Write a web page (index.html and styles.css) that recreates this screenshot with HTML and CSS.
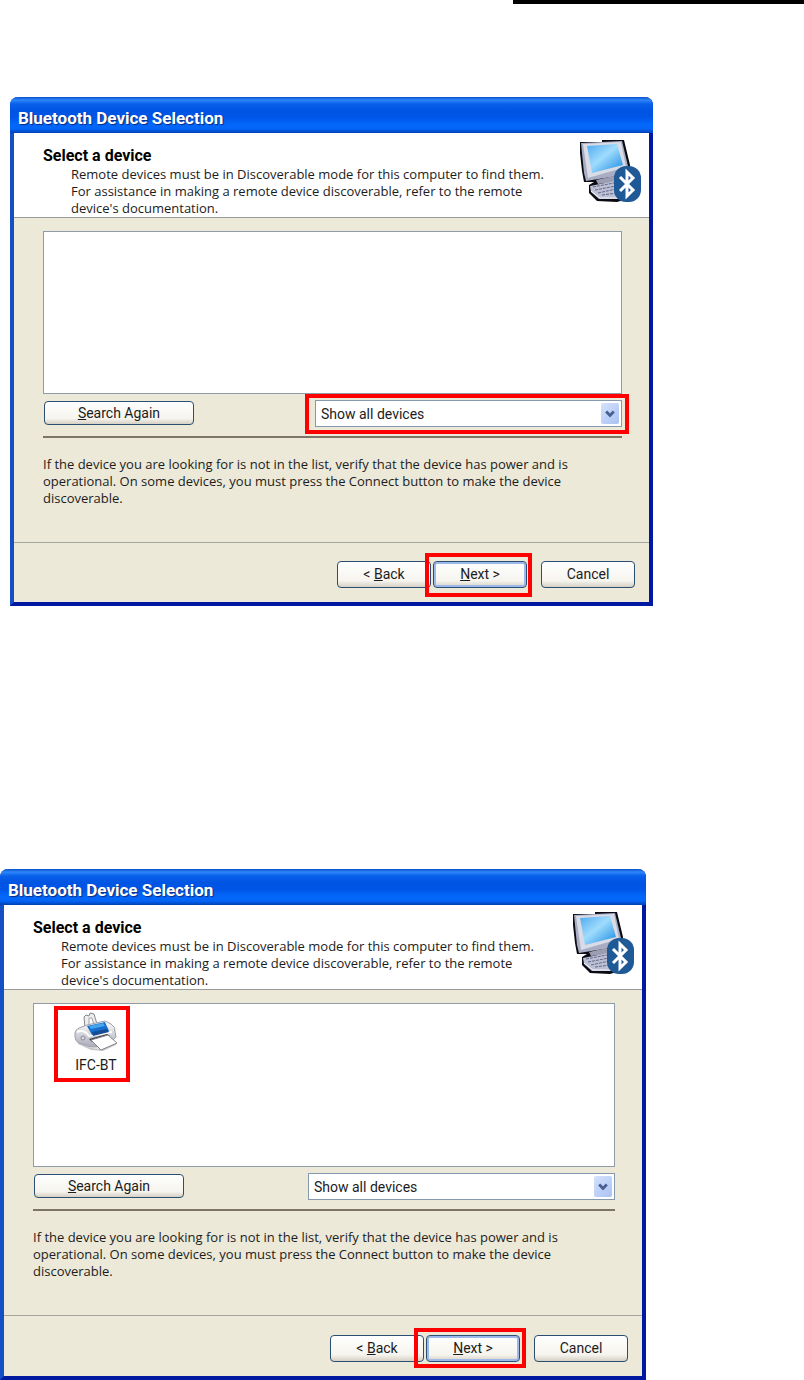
FILE: index.html
```
<!DOCTYPE html>
<html lang="en">
<head>
    <meta charset="UTF-8">
    <meta name="viewport" content="width=device-width, initial-scale=1.0">
    <title>Bluetooth Device Selection</title>
    <link rel="stylesheet" href="styles.css">
</head>
<body>
    <!-- Shared icons -->
    <svg class="sprite" aria-hidden="true">
        <defs>
            <linearGradient id="screen" x1="0" y1="0" x2="1" y2="1">
                <stop offset="0" stop-color="#4fa9ee"/>
                <stop offset="0.45" stop-color="#9fdcfd"/>
                <stop offset="1" stop-color="#1487e0"/>
            </linearGradient>
            <linearGradient id="shell" x1="0" y1="0" x2="0" y2="1">
                <stop offset="0" stop-color="#ffffff"/>
                <stop offset="1" stop-color="#a9abb8"/>
            </linearGradient>
        </defs>
        <symbol id="icon-computer" viewBox="0 0 62 64">
            <path d="M1 3 L23 3 L23 1 L45 1 L51 26 L48 60 L38 63 L18 62 L10 54 L10 46 L15 43 L5 43 L3 32 L1 14 Z" fill="#0a0a12"/>
            <path d="M2 4 L43 2 L49 27 L38 37 L7 42 L5 34 Z" fill="#a9adc4"/>
            <path d="M4 5 L42 3 L47 28 L9 39 Z" fill="#d9dbe6"/>
            <path d="M8 7 L38 5 L44 26 L13 34 Z" fill="url(#screen)"/>
            <path d="M17 41 L35 37 L36 43 L19 45 Z" fill="#9b9db2"/>
            <path d="M11 47 L36 42 L42 50 L40 60 L20 60 L12 53 Z" fill="#bcc0d4"/>
            <path d="M14 48 L35 44 M16 51 L37 47 M19 54 L37 50 M23 56 L38 54" stroke="#63688a" stroke-width="1" stroke-dasharray="3 1"/>
            <path d="M12 52 L21 59 L40 59" stroke="#f4f4fa" stroke-width="1" fill="none"/>
            <rect x="35" y="27" width="27" height="36" rx="12" fill="#205a96"/>
            <path d="M41 38 L54 51 L48 57 L48 33 L54 39 L41 52" fill="none" stroke="#fff" stroke-width="3"/>
        </symbol>
        <symbol id="icon-printer" viewBox="0 0 44 40">
            <path d="M3 28 L17 36 L29 37 L42 30 L42 33 L29 39 L17 38 L4 32 Z" fill="#c7c7cb"/>
            <path d="M11 16 L10 5 L12 3 L15 4 L16 1 L20 2 L23 12" fill="#eeeef0" stroke="#85868c"/>
            <path d="M15 14 L15 6 L18 6 L20 13" fill="#fff" stroke="#a3a4aa"/>
            <path d="M1 21 Q1 18 5 16 L13 13 L31 9 L37 12 Q42 15 41 20 L42 25 L39 28 L23 35 L17 35 L5 31 Q1 29 1 25 Z" fill="url(#shell)" stroke="#a0a1a9"/>
            <path d="M3 20 Q10 17 15 24 L38 20" fill="none" stroke="#fff" stroke-width="2"/>
            <path d="M13 14 L31 10 L35 19 L18 23 Z" fill="#176fce"/>
            <path d="M15 14 L29 11 L31 14 L17 17 Z" fill="#48a5ed"/>
            <path d="M18 20 L33 17 L35 20 L19 24 Z" fill="#164c96"/>
            <path d="M15 27 L33 22 L36 24 L18 30 Z" fill="#3c3d46"/>
            <path d="M17 28 L34 23 L43 31 L27 38 Z" fill="#fff" stroke="#83848a"/>
            <circle cx="9" cy="26" r="2" fill="#d9d9df" stroke="#888992"/>
        </symbol>
        <symbol id="icon-chevron" viewBox="0 0 18 22">
            <path d="M5 9 L9 13 L13 9" fill="none" stroke="#485f91" stroke-width="3"/>
        </symbol>
    </svg>

    <div class="rule"></div>

    <main class="page">
        <section class="dialog dialog-search">
            <h1 class="title">Bluetooth Device Selection</h1>
            <header class="intro">
                <div class="intro-text">
                    <h2>Select a device</h2>
                    <p>Remote devices must be in Discoverable mode for this computer to find them.<br>
                    For assistance in making a remote device discoverable, refer to the remote<br>
                    device's documentation.</p>
                </div>
                <svg class="computer" aria-hidden="true"><use href="#icon-computer"/></svg>
            </header>
            <div class="content">
                <div class="device-list"></div>
                <div class="tools">
                    <button type="button" class="btn btn-search"><u>S</u>earch Again</button>
                    <div class="select-box highlight">
                        <select aria-label="Device filter">
                            <option>Show all devices</option>
                        </select>
                        <svg class="arrow" aria-hidden="true"><use href="#icon-chevron"/></svg>
                    </div>
                </div>
                <hr>
                <p class="hint">If the device you are looking for is not in the list, verify that the device has power and is<br>
                operational. On some devices, you must press the Connect button to make the device<br>
                discoverable.</p>
            </div>
            <footer class="actions">
                <button type="button" class="btn">&lt; <u>B</u>ack</button>
                <div class="next highlight">
                    <button type="button" class="btn btn-default"><u>N</u>ext &gt;</button>
                </div>
                <button type="button" class="btn">Cancel</button>
            </footer>
        </section>

        <section class="dialog dialog-found">
            <h1 class="title">Bluetooth Device Selection</h1>
            <header class="intro">
                <div class="intro-text">
                    <h2>Select a device</h2>
                    <p>Remote devices must be in Discoverable mode for this computer to find them.<br>
                    For assistance in making a remote device discoverable, refer to the remote<br>
                    device's documentation.</p>
                </div>
                <svg class="computer" aria-hidden="true"><use href="#icon-computer"/></svg>
            </header>
            <div class="content">
                <div class="device-list">
                    <button type="button" class="device highlight">
                        <svg class="printer" aria-hidden="true"><use href="#icon-printer"/></svg>
                        <span>IFC-BT</span>
                    </button>
                </div>
                <div class="tools">
                    <button type="button" class="btn btn-search"><u>S</u>earch Again</button>
                    <div class="select-box">
                        <select aria-label="Device filter">
                            <option>Show all devices</option>
                        </select>
                        <svg class="arrow" aria-hidden="true"><use href="#icon-chevron"/></svg>
                    </div>
                </div>
                <hr>
                <p class="hint">If the device you are looking for is not in the list, verify that the device has power and is<br>
                operational. On some devices, you must press the Connect button to make the device<br>
                discoverable.</p>
            </div>
            <footer class="actions">
                <button type="button" class="btn">&lt; <u>B</u>ack</button>
                <div class="next highlight">
                    <button type="button" class="btn btn-default"><u>N</u>ext &gt;</button>
                </div>
                <button type="button" class="btn">Cancel</button>
            </footer>
        </section>
    </main>
</body>
</html>
```
FILE: styles.css
```
* {
    box-sizing: border-box;
}
body {
    margin: 0;
    background-color: #fff;
    color: #1c1c1c;
    font-family: Roboto, "Liberation Sans", Arial, sans-serif;
    font-size: 14px;
    line-height: 17px;
}
h1, h2, p {
    margin: 0;
}
p {
    font-family: "Open Sans", "Liberation Sans", Arial, sans-serif;
    font-size: 13px;
}
.sprite {
    display: block;
    width: 0;
    height: 0;
}
.rule {
    width: 291px;
    height: 4px;
    margin-left: auto;
    background-color: #000;
}
.page {
    display: flex;
    flex-direction: column;
    gap: 263px;
    padding-top: 93px;
}

/* Dialog window */
.dialog {
    width: 100%;
    background-color: #ece9d8;
    border: 4px solid #0019a0;
    border-top: 0;
    border-left-color: #1450c4;
    border-radius: 8px 8px 0 0;
}
.dialog-search {
    max-width: 643px;
    margin-left: 10px;
}
.dialog-found {
    max-width: 646px;
}
.title {
    height: 36px;
    margin: 0 -4px;
    padding: 4px 8px 0;
    border-radius: 8px 8px 0 0;
    background: linear-gradient(#0a50cc 0, #2f86fa 3px, #0860ea 7px, #0054e3 14px, #0055e8 20px, #0468fc 28px, #0464f6 32px, #0040b4 36px);
    color: #fff;
    font-size: 17px;
    line-height: 34px;
    text-shadow: 1px 1px 1px #0a2a80;
}
.intro {
    display: flex;
    justify-content: space-between;
    padding: 6px 8px 0 29px;
    background-color: #fff;
    border-bottom: 1px solid #9a9c9c;
}
.intro-text {
    padding-top: 8px;
}
.intro h2 {
    color: #000;
    font-size: 16px;
    line-height: 17px;
}
.intro p {
    margin: 2px 0 0 28px;
}
.computer {
    flex: none;
    width: 62px;
    height: 64px;
}
.content {
    padding: 13px 27px 35px 29px;
}
.device-list {
    min-height: 163px;
    padding: 2px 20px;
    background-color: #fff;
    border: 1px solid #8d9ca8;
}
.dialog-found .device-list {
    min-height: 164px;
}
.tools {
    display: flex;
    justify-content: space-between;
    align-items: flex-start;
    margin: 6px 0 9px;
}
hr {
    height: 2px;
    margin: 0 0 18px;
    border: 0;
    background-color: #7d7666;
}
.actions {
    display: flex;
    justify-content: flex-end;
    padding: 18px 14px 14px;
    border-top: 1px solid #a5a79f;
}
.dialog-found .actions {
    padding-top: 19px;
}

/* Controls */
.btn {
    width: 94px;
    height: 27px;
    padding: 0;
    border: 1px solid #2a4f72;
    border-radius: 4px;
    background: linear-gradient(#fff, #f5f4ee 75%, #d6d0c4);
    color: #1c1c1c;
    font-family: inherit;
    font-size: 14px;
    line-height: 17px;
}
.btn-search {
    width: 150px;
    height: 24px;
    margin: 1px;
}
.btn-default {
    box-shadow: inset 0 0 0 2px #9db9ec;
}
.next {
    margin: 0 14px 0 2px;
}
.select-box {
    width: 307px;
    height: 27px;
    border: 1px solid #8599ae;
    position: relative;
}
select {
    display: block;
    width: 100%;
    height: 100%;
    padding: 0 24px 0 5px;
    border: 0;
    appearance: none;
    background-color: #fff;
    color: #1c1c1c;
    font-family: inherit;
    font-size: 14px;
}
.arrow {
    position: absolute;
    top: 2px;
    right: 2px;
    width: 18px;
    height: 21px;
    border-radius: 2px;
    background: linear-gradient(135deg, #d5e2fc, #a9c2f3);
    pointer-events: none;
}
.device {
    display: flex;
    flex-direction: column;
    align-items: center;
    width: 76px;
    height: 76px;
    padding: 6px 0 0 8px;
    border: 0;
    background: none;
    color: #1c1c1c;
    font-family: inherit;
    font-size: 14px;
    line-height: 17px;
}
.printer {
    width: 44px;
    height: 40px;
    margin-bottom: 5px;
}

/* Red call-out frames */
.highlight {
    position: relative;
}
.highlight::after {
    content: "";
    position: absolute;
    inset: 0;
    border: 4px solid #f00;
    pointer-events: none;
}
.select-box.highlight::after {
    inset: -7px -8px -8px -11px;
}
.next.highlight::after {
    inset: -8px -5px -9px -8px;
}
.dialog-found .next.highlight::after {
    inset: -7px -6px -6px -12px;
}
```
